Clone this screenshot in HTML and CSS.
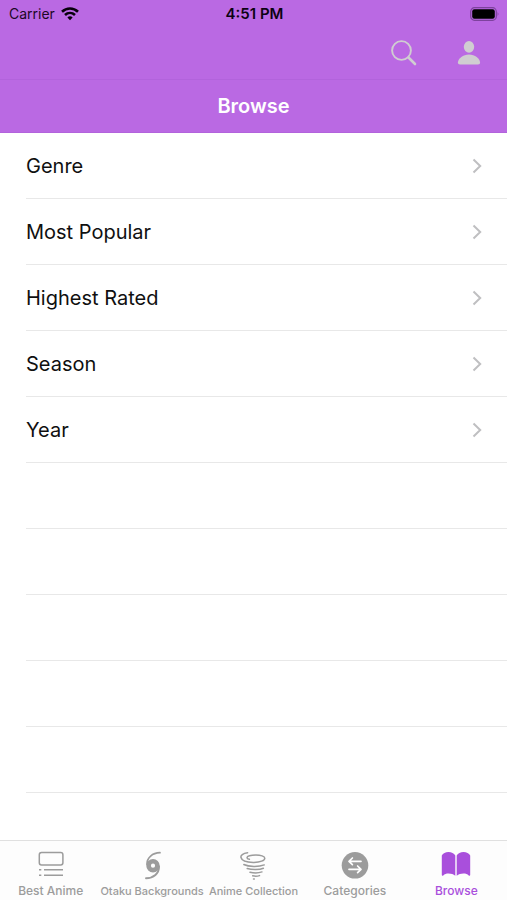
FILE: index.html
```html
<!DOCTYPE html>
<html lang="en">
<head>
<meta charset="utf-8">
<meta name="viewport" content="width=device-width, initial-scale=1">
<title>Browse</title>
<link rel="stylesheet" href="styles.css">
</head>
<body>
<div class="app">
  <header class="header">
    <div class="status">
      <div class="carrier">
        <span>Carrier</span>
        <svg width="18" height="14" viewBox="0 0 18 14" fill="none" stroke="#08000c" stroke-width="2.6" aria-hidden="true">
          <path d="M1 4.800C5.600.4 12.400.4 17 4.800"/>
          <path d="M4 8C6.900 5.300 11.100 5.300 14 8"/>
          <path d="M6.400 10.400C7.900 9 10.100 9 11.600 10.400L9 13.200Z" fill="#08000c" stroke="none"/>
        </svg>
      </div>
      <span class="clock">4:51 PM</span>
      <svg class="battery" width="30" height="14" viewBox="0 0 30 14" aria-hidden="true">
        <rect x=".7" y=".7" width="25.600" height="12.600" rx="3.800" fill="none" stroke="#7d429d" stroke-width="1.200"/>
        <rect x="2.200" y="2.200" width="22.600" height="9.600" rx="2.200" fill="#000"/>
        <path d="M27.600 4.800q1.800 2.200 0 4.400z" fill="#7d429d"/>
      </svg>
    </div>
    <div class="toolbar">
      <button class="tool" type="button" aria-label="Search">
        <svg width="26" height="26" viewBox="0 0 26 26" fill="none" stroke="#d0cdd1" aria-hidden="true">
          <circle cx="10.500" cy="10.500" r="9.400" stroke-width="1.900"/>
          <path d="M17.500 17.500L24 24" stroke-width="2.600" stroke-linecap="round"/>
        </svg>
      </button>
      <button class="tool" type="button" aria-label="Profile">
        <svg width="24" height="26" viewBox="0 0 24 26" fill="#d0cdd1" aria-hidden="true">
          <ellipse cx="12" cy="6.800" rx="5.200" ry="5.900"/>
          <path d="M3 24.500Q.8 24.500.9 22.800C1.200 18.300 6 14.600 12 14.600s10.800 3.700 11.100 8.200q.1 1.700-2.100 1.700z"/>
        </svg>
      </button>
    </div>
    <h1 class="title">Browse</h1>
  </header>

  <main class="content">
    <ul class="list">
      <li><a class="row" href="#genre">Genre<svg class="chevron" viewBox="0 0 10 16"><path d="M1.500 1.500L8.200 8l-6.700 6.500"/></svg></a></li>
      <li><a class="row" href="#popular">Most Popular<svg class="chevron" viewBox="0 0 10 16"><path d="M1.500 1.500L8.200 8l-6.700 6.500"/></svg></a></li>
      <li><a class="row" href="#rated">Highest Rated<svg class="chevron" viewBox="0 0 10 16"><path d="M1.500 1.500L8.200 8l-6.700 6.500"/></svg></a></li>
      <li><a class="row" href="#season">Season<svg class="chevron" viewBox="0 0 10 16"><path d="M1.500 1.500L8.200 8l-6.700 6.500"/></svg></a></li>
      <li><a class="row" href="#year">Year<svg class="chevron" viewBox="0 0 10 16"><path d="M1.500 1.500L8.200 8l-6.700 6.500"/></svg></a></li>
    </ul>
    <div class="blank" aria-hidden="true">
      <div class="row"></div>
      <div class="row"></div>
      <div class="row"></div>
      <div class="row"></div>
      <div class="row"></div>
    </div>
  </main>

  <nav class="tabs" aria-label="Main">
    <a class="tab" href="#best">
      <svg width="30" height="30" viewBox="0 0 30 30" fill="none" stroke="currentColor" stroke-width="1.500" aria-hidden="true">
        <rect x="3.300" y="2.600" width="23.600" height="12.400" rx="2.200"/>
        <path d="M8 19.800h19M8 25.200h19M3 19.800h2.300M3 25.200h2.300"/>
      </svg>
      <span>Best Anime</span>
    </a>
    <a class="tab compact" href="#otaku">
      <svg width="30" height="30" viewBox="0 0 30 30" fill="none" stroke="currentColor" stroke-linecap="round" aria-hidden="true">
        <circle cx="16" cy="15.700" r="4.400" stroke-width="4.600"/>
        <path d="M23 2.700C15.500 3 9.800 7.500 10 14.500" stroke-width="1.700"/>
        <path d="M9 28.300c7.500-.3 13.200-4.800 13-11.800" stroke-width="1.900"/>
      </svg>
      <span>Otaku Backgrounds</span>
    </a>
    <a class="tab" href="#collection">
      <svg width="30" height="30" viewBox="0 0 30 30" fill="none" stroke="currentColor" stroke-width="1.500" stroke-linecap="round" aria-hidden="true">
        <path d="M9.600 2.800C5 3.400 2.400 5.200 3 7.500c.9 3.400 6.500 5 13 4.900 6-.1 10.800-1.800 10.800-4.200 0-2.100-4.200-3.100-9-3.100-5 0-8.800 1-8.800 2.600 0 .8.900 1.300 2.400 1.600"/>
        <path d="M5.800 14.500c5 2.500 15 2.500 20.500.4M9.200 18.500c5 1.500 12.500 1.300 16.200-.3M12 22.200c4 1 8.500.9 12-.3M14.700 25.800c2.300.5 4.800.4 6.800-.2M15.500 29h.8"/>
      </svg>
      <span class="compact">Anime Collection</span>
    </a>
    <a class="tab" href="#categories">
      <svg width="30" height="30" viewBox="0 0 30 30" aria-hidden="true">
        <circle cx="15" cy="15.300" r="13.300" fill="currentColor"/>
        <g fill="none" stroke="#fff" stroke-width="1.700" stroke-linecap="round" stroke-linejoin="round">
          <path d="M21 11.300H9.500M12.400 8L9 11.300l3.400 3.300M9 19.300h11.500M17.600 16l3.400 3.300-3.400 3.300"/>
        </g>
      </svg>
      <span>Categories</span>
    </a>
    <a class="tab active" href="#browse" aria-current="page">
      <svg width="30" height="30" viewBox="0 0 30 30" fill="currentColor" aria-hidden="true">
        <path d="M.8 5.500C2 3.200 4.500 2 7.500 2s5.500 1.200 6.800 3.500v20.300c-1.800-1.500-4.200-2.200-6.700-2.200-2.400 0-4 .6-5.300 1.800-.9.700-1.500.3-1.500-.6z"/>
        <path d="M29.200 5.500C28 3.200 25.500 2 22.500 2s-5.500 1.200-6.800 3.500v20.300c1.800-1.500 4.200-2.200 6.700-2.200 2.400 0 4 .6 5.300 1.800.9.700 1.500.3 1.500-.6z"/>
      </svg>
      <span>Browse</span>
    </a>
  </nav>
</div>
</body>
</html>
```
FILE: styles.css
```css
* {
  box-sizing: border-box;
}

body {
  margin: 0;
  background: #fff;
  color: #101010;
  font-family: Inter, "Liberation Sans", sans-serif;
}

.app {
  display: flex;
  flex-direction: column;
  min-height: 100vh;
}

.header {
  background: #ba69e3;
}

.status {
  display: grid;
  grid-template-columns: 1fr auto 1fr;
  align-items: center;
  height: 27px;
  padding: 0 7px 0 9px;
  color: #1c0826;
  font-size: 14px;
}

.carrier {
  display: flex;
  align-items: center;
  gap: 6px;
}

.clock {
  color: #0c0212;
  font-size: 15px;
  font-weight: 600;
}

.battery {
  justify-self: end;
}

.toolbar {
  display: flex;
  justify-content: flex-end;
  align-items: center;
  gap: 24px;
  height: 52px;
  padding: 0 18px;
}

.tool {
  display: grid;
  place-items: center;
  width: 41px;
  height: 40px;
  padding: 0;
  border: 0;
  background: none;
}

.title {
  margin: 0;
  border-top: 1px solid #b263dc;
  border-bottom: 1px solid #b263dc;
  color: #fff;
  font-size: 20px;
  font-weight: 600;
  line-height: 52px;
  text-align: center;
}

.content {
  flex: 1;
}

.list {
  margin: 0;
  padding: 0;
  list-style: none;
}

.row {
  display: flex;
  align-items: center;
  justify-content: space-between;
  height: 66px;
  margin-left: 26px;
  padding-right: 25px;
  border-bottom: 1px solid #e8e8e8;
  color: inherit;
  font-size: 20px;
  text-decoration: none;
}

.chevron {
  width: 10px;
  height: 16px;
  fill: none;
  stroke: #bfbfc1;
  stroke-width: 2;
}

.tabs {
  display: grid;
  grid-template-columns: repeat(5, minmax(0, 1fr));
  height: 60px;
  border-top: 1px solid #e0e0e0;
  background: #fdfdfd;
}

.tab {
  display: flex;
  flex-direction: column;
  align-items: center;
  gap: 3px;
  padding-top: 9px;
  color: #9c9c9c;
  font-size: 12px;
  font-weight: 500;
  line-height: 16px;
  text-decoration: none;
  white-space: nowrap;
}

.compact {
  font-size: 11px;
}

.active {
  color: #a94fdc;
}
```
